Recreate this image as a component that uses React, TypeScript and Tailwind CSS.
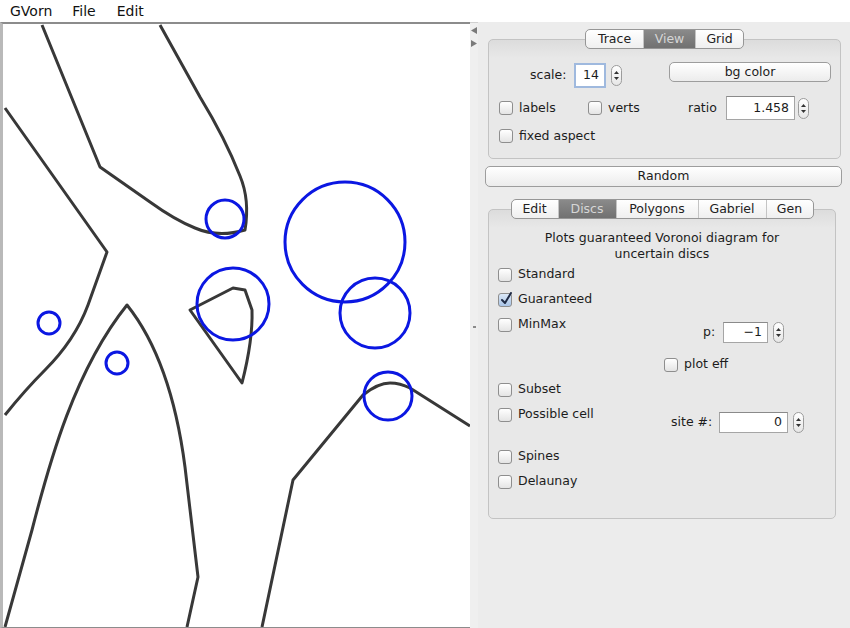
import React from "react";

const font = { fontFamily: '"DejaVu Sans", "Liberation Sans", sans-serif' };

function Check({ checked = false }: { checked?: boolean }) {
  return (
    <span
      className={
        "relative inline-block w-[14px] h-[14px] rounded-[3px] border border-[#8e8e8e] shrink-0 " +
        (checked ? "bg-[linear-gradient(#dbe8f7,#a9c4e6)]" : "bg-[linear-gradient(#ffffff,#e4e4e4)]")
      }
    >
      {checked && (
        <svg className="absolute left-[1px] -top-[2px]" width="13" height="14" viewBox="0 0 13 14">
          <path d="M2 8 L5 11 L11 1" fill="none" stroke="#1f2a44" strokeWidth="2" strokeLinecap="round" strokeLinejoin="round" />
        </svg>
      )}
    </span>
  );
}

function Box({ label, checked }: { label: string; checked?: boolean }) {
  return (
    <span className="flex items-center gap-[6px]">
      <Check checked={checked} />
      <span>{label}</span>
    </span>
  );
}

function Spinner({ h = "h-[21px]" }: { h?: string }) {
  return (
    <span className={"flex flex-col items-center justify-center gap-[3px] w-[11px] rounded-[6px] border border-[#9c9c9c] bg-[linear-gradient(#ffffff,#e6e6e6)] shrink-0 " + h}>
      <svg width="5" height="3" viewBox="0 0 5 3"><path d="M0 3 L2.5 0 L5 3 Z" fill="#333" /></svg>
      <svg width="5" height="3" viewBox="0 0 5 3"><path d="M0 0 L2.5 3 L5 0 Z" fill="#333" /></svg>
    </span>
  );
}

function Field({ value, w, h = "h-[21px]", focus = false }: { value: string; w: string; h?: string; focus?: boolean }) {
  return (
    <span
      className={
        "flex items-center justify-end pr-[5px] bg-white shrink-0 " +
        w + " " + h + " " +
        (focus ? "border-2 border-[#9fb9de]" : "border border-[#a5a5a5] border-t-[#8a8a8a]")
      }
    >
      {value}
    </span>
  );
}

function Tabs({ items, active, widths }: { items: string[]; active: string; widths: string[] }) {
  return (
    <div className="relative z-10 flex self-center h-[20px] rounded-[5px] border border-[#969696] overflow-hidden bg-[linear-gradient(#ffffff,#efefef)]">
      {items.map((t, i) => (
        <div
          key={t}
          className={
            "flex items-center justify-center " +
            widths[i] + " " +
            (i > 0 ? "border-l border-[#c4c4c4] " : "") +
            (t === active ? "bg-[linear-gradient(#8a8a8a,#717171)] text-[#d6d6d6] border-[#6c6c6c]" : "text-[#222]")
          }
        >
          {t}
        </div>
      ))}
    </div>
  );
}

function Canvas() {
  const dark = { fill: "none", stroke: "#383838", strokeWidth: 3, strokeLinejoin: "round" as const };
  const blue = { fill: "none", stroke: "#0b17e2", strokeWidth: 3 };
  return (
    <div className="w-[470px] h-full bg-white border-l-[3px] border-t-[2px] border-b border-[#8c8c8c] border-l-[#b9b9b9] overflow-hidden">
      <svg width="467" height="603" viewBox="3 24 467 603">
        <path d="M42,25 L100,167 L150,202 Q175,220 195,228 Q218,238 245,230 Q250,200 240,176 Q225,138 200,97 L160,25" {...dark} />
        <path d="M5,108 L107,252 L88,305 Q75,340 45,370 Q25,390 5,415" {...dark} />
        <path d="M5,627 L32,530 C50,460 75,370 127,305 C155,340 175,390 185,467 L198,577 L187,627" {...dark} />
        <path d="M190,310 L233,288 L245,290 L252,310 Q253,340 242,383 Z" {...dark} />
        <path d="M262,627 L293,480 L363,395 Q378,383 390,383 Q400,383 410,388 L470,426" {...dark} />
        <circle cx="225" cy="219" r="19" {...blue} />
        <circle cx="345" cy="242" r="60" {...blue} />
        <circle cx="233" cy="304" r="36" {...blue} />
        <circle cx="375" cy="313" r="35" {...blue} />
        <circle cx="49" cy="323" r="11" {...blue} />
        <circle cx="117" cy="363" r="11" {...blue} />
        <circle cx="388" cy="396" r="24" {...blue} />
      </svg>
    </div>
  );
}

export default function App() {
  return (
    <div className="w-[850px] h-[628px] flex flex-col bg-[#ececec] text-[12.5px] text-[#1c1c1c] overflow-hidden" style={font}>
      {/* menu bar */}
      <div className="h-[22px] bg-white flex items-center text-[14px] text-[#111] shrink-0">
        <span className="ml-[10px]">GVorn</span>
        <span className="ml-[20px]">File</span>
        <span className="ml-[21px]">Edit</span>
      </div>

      <div className="flex flex-1 min-h-0">
        <Canvas />

        {/* splitter */}
        <div className="w-[8px] flex flex-col items-center pt-[4px] gap-[6px] bg-[#efefef] border-t border-[#d0d0d0]">
          <svg width="6" height="7" viewBox="0 0 6 7"><path d="M6 0 L0 3.5 L6 7 Z" fill="#7a7a7a" /></svg>
          <svg width="6" height="7" viewBox="0 0 6 7"><path d="M0 0 L6 3.5 L0 7 Z" fill="#7a7a7a" /></svg>
          <div className="flex-1 flex items-center pb-[28px]">
            <span className="block w-[3px] h-[2px] bg-[#8a8a8a]" />
          </div>
        </div>

        {/* right panel */}
        <div className="flex-1 flex flex-col pt-[7px]">
          <div className="ml-[10px] w-[353px] flex flex-col">
            <Tabs items={["Trace", "View", "Grid"]} active="View" widths={["w-[57px]", "w-[52px]", "w-[48px]"]} />
            <div className="-mt-[10px] h-[120px] rounded-[5px] border border-[#c3c3c3] bg-[linear-gradient(#dcdcdc_0px,#e8e8e8_18px)] pt-[22px] pl-[10px] flex flex-col">
              <div className="flex items-start h-[26px]">
                <div className="flex items-center mt-[1px]">
                  <span className="ml-[31px] w-[37px]">scale:</span>
                  <span className="ml-[7px]"><Field value="14" w="w-[32px]" h="h-[25px]" focus /></span>
                  <span className="ml-[5px]"><Spinner /></span>
                </div>
                <button className="ml-[47px] w-[162px] h-[20px] rounded-[5px] border border-[#9d9d9d] bg-[linear-gradient(#ffffff,#ececec)] flex items-center justify-center">
                  bg color
                </button>
              </div>
              <div className="flex items-center h-[24px] mt-[8px]">
                <span className="w-[89px]"><Box label="labels" /></span>
                <span className="w-[100px]"><Box label="verts" /></span>
                <span className="w-[38px]">ratio</span>
                <Field value="1.458" w="w-[69px]" h="h-[24px]" />
                <span className="ml-[3px]"><Spinner /></span>
              </div>
              <div className="flex items-center h-[24px] mt-[4px]">
                <Box label="fixed aspect" />
              </div>
            </div>
          </div>

          <button className="ml-[7px] mt-[7px] w-[357px] h-[21px] rounded-[5px] border border-[#9d9d9d] bg-[linear-gradient(#ffffff,#ececec)] flex items-center justify-center">
            Random
          </button>

          <div className="ml-[10px] mt-[12px] w-[348px] flex flex-col">
            <Tabs
              items={["Edit", "Discs", "Polygons", "Gabriel", "Gen"]}
              active="Discs"
              widths={["w-[46px]", "w-[58px]", "w-[82px]", "w-[68px]", "w-[47px]"]}
            />
            <div className="-mt-[10px] h-[310px] rounded-[5px] border border-[#c3c3c3] bg-[linear-gradient(#dcdcdc_0px,#e8e8e8_18px)] pt-[20px] pl-[9px] flex flex-col">
              <div className="text-center leading-[16px] pr-[9px]">
                Plots guaranteed Voronoi diagram for
                <br />
                uncertain discs
              </div>
              <div className="flex items-center h-[25px]"><Box label="Standard" /></div>
              <div className="flex items-center h-[25px]"><Box label="Guaranteed" checked /></div>
              <div className="flex items-start h-[40px]">
                <div className="w-[205px] h-[25px] flex items-center"><Box label="MinMax" /></div>
                <div className="flex items-center mt-[10px]">
                  <span className="w-[20px]">p:</span>
                  <Field value="−1" w="w-[45px]" />
                  <span className="ml-[5px]"><Spinner /></span>
                </div>
              </div>
              <div className="flex items-center h-[25px] pl-[166px]"><Box label="plot eff" /></div>
              <div className="flex items-center h-[25px]"><Box label="Subset" /></div>
              <div className="flex items-start h-[42px]">
                <div className="w-[173px] h-[25px] flex items-center"><Box label="Possible cell" /></div>
                <div className="flex items-center mt-[10px]">
                  <span className="w-[48px]">site #:</span>
                  <Field value="0" w="w-[69px]" />
                  <span className="ml-[5px]"><Spinner /></span>
                </div>
              </div>
              <div className="flex items-center h-[25px]"><Box label="Spines" /></div>
              <div className="flex items-center h-[25px]"><Box label="Delaunay" /></div>
            </div>
          </div>
        </div>
      </div>
    </div>
  );
}
